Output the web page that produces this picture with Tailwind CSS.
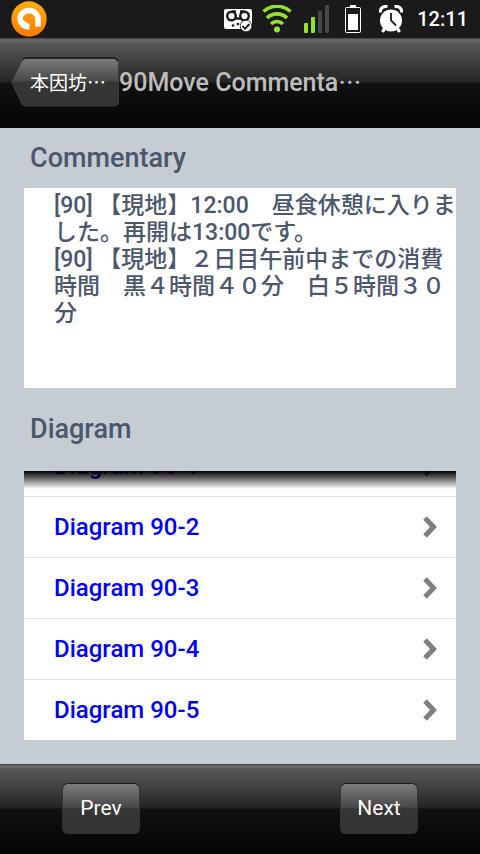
<!DOCTYPE html>
<html lang="ja">
<head>
<meta charset="utf-8">
<meta name="viewport" content="width=device-width, initial-scale=1">
<title>90Move Commentary</title>
<script src="https://cdn.jsdelivr.net/npm/@tailwindcss/browser@4"></script>
</head>
<body class="flex min-h-screen flex-col bg-[#c5ccd4] font-[Roboto,'Noto_Sans_CJK_JP',sans-serif] text-[#4c566c]">

<!-- Status bar -->
<div class="flex h-[38px] items-center bg-[#1a1a1a] pr-3 pl-[11px] text-white">
  <svg class="size-9" viewBox="0 0 36 36" aria-hidden="true">
    <defs><linearGradient id="orange" x1="0" y1="0" x2="0" y2="1"><stop offset="0" stop-color="#ffb000"/><stop offset="1" stop-color="#ff7a00"/></linearGradient></defs>
    <circle cx="18" cy="18" r="17.7" fill="url(#orange)"/>
    <path d="M18.500 25.500H17A8 8.300 0 0 1 9 17.500A9 8.500 0 0 1 18 9.500A8.900 8.500 0 0 1 27 18V25.500" fill="none" stroke="#fff" stroke-width="5.600"/>
    <path d="M9 20C9 25 13 28.400 17.500 28.400Q18.500 26 18 23L12 19Z" fill="#fff"/>
  </svg>
  <svg class="ml-auto h-[26px] w-7 shrink-0" viewBox="0 0 28 26" aria-hidden="true">
    <rect x="0" y="3" width="28" height="20" rx="2" fill="#fff"/>
    <g fill="none" stroke="#1a1a1a" stroke-width="2.400"><circle cx="7.500" cy="10" r="4.300"/><circle cx="20.500" cy="10" r="4.300"/><path d="M8 5.500h4M16 5.500h4M11 12.500h6"/></g>
    <circle cx="9" cy="19.500" r="1.300" fill="#1a1a1a"/><circle cx="14" cy="18" r="1.300" fill="#1a1a1a"/>
    <circle cx="22" cy="20" r="5.800" fill="#fff" stroke="#1a1a1a" stroke-width=".8"/>
    <path d="M18.500 20l2.500 2.600 4.500-4.600" fill="none" stroke="#1a1a1a" stroke-width="1.800"/>
  </svg>
  <svg class="ml-2.5 h-7 w-[30px] shrink-0" viewBox="0 0 30 28" aria-hidden="true">
    <g fill="none" stroke="#94e12d" stroke-width="3.600"><path d="M1.500 6.500C9-.5 21-.5 28.500 6.500"/><path d="M5 13c5.500-5.500 14.500-5.500 20 0"/><path d="M9 19c3.500-3.300 8.500-3.300 12 0"/></g>
    <circle cx="15" cy="24.500" r="3" fill="#94e12d"/>
  </svg>
  <svg class="ml-3 h-7 w-[26px] shrink-0" viewBox="0 0 26 28" aria-hidden="true">
    <rect x="0" y="18" width="4" height="10" rx="1" fill="#94e12d"/><rect x="7" y="12" width="4" height="16" rx="1" fill="#94e12d"/>
    <rect x="14" y="6" width="4" height="22" rx="1" fill="#484848"/><rect x="21" y="0" width="4" height="28" rx="1" fill="#484848"/>
  </svg>
  <svg class="ml-[15px] h-7 w-4 shrink-0" viewBox="0 0 16 28" aria-hidden="true">
    <rect x="5" y="0" width="6" height="2" fill="#fff"/><rect x=".5" y="2.500" width="15" height="25" rx="1" fill="none" stroke="#fff"/><rect x="3" y="9" width="10" height="16" fill="#fff"/>
  </svg>
  <svg class="ml-[18px] h-7 w-6 shrink-0" viewBox="0 0 24 28" aria-hidden="true">
    <circle cx="12" cy="15.500" r="11" fill="#fff"/>
    <path d="M1.300 7.500C1 3 4.500.8 8.500 1.700M22.700 7.500C23 3 19.500.8 15.500 1.700" fill="none" stroke="#fff" stroke-width="3.200"/>
    <path d="M5.500 23.500L3.500 27M18.500 23.500l2 3.500" stroke="#fff" stroke-width="3.200"/>
    <path d="M12 8v7.500l5 5" fill="none" stroke="#1a1a1a" stroke-width="1.800"/>
  </svg>
  <span class="ml-3.5 text-[20px] leading-7 font-medium">12:11</span>
</div>

<!-- Title bar -->
<header class="flex h-[90px] items-center border-t border-[#4a4a4a] bg-[linear-gradient(#5f5f5f_0px,#6b6b6b_2px,#575757_4px,#4e4e4e_12px,#242424_43px,#111_44px,#050505_88px)] pb-1 pl-[11px]">
  <button class="relative h-[50px] w-[108px] shrink-0 pl-1.5 font-['Noto_Sans_CJK_JP',sans-serif] text-[19px] leading-7 text-white">
    <svg class="absolute inset-0 size-full" viewBox="0 0 108 50" preserveAspectRatio="none" aria-hidden="true">
      <defs><linearGradient id="steel" x1="0" y1="0" x2="0" y2="1"><stop offset="0" stop-color="#7c7c7c"/><stop offset=".47" stop-color="#484848"/><stop offset=".5" stop-color="#363636"/><stop offset="1" stop-color="#343434"/></linearGradient></defs>
      <path d="M.5 25L11 3.500Q12.500 1.500 15 1.500H103Q107.500 1.500 107.500 6V45Q107.500 49 103 49H14Q12 49 11 47Z" fill="url(#steel)" stroke="#3c3c3c"/>
      <path d="M12 2.500L14 1H104L107 4" fill="none" stroke="#1c1c1c" stroke-width="1.500"/>
    </svg>
    <span class="relative">本因坊…</span>
  </button>
  <h1 class="text-[25px] leading-10 font-medium whitespace-nowrap text-[#bdbdbd]">90Move Commenta<span class="font-['Noto_Sans_CJK_JP',sans-serif] text-[23px]">…</span></h1>
</header>

<main class="flex-1 px-6 pb-6">
  <h2 class="flex h-[60px] items-center px-1.5 text-[27px] font-medium">Commentary</h2>
  <section class="min-h-[200px] bg-white pt-1 pl-[30px] text-[23px] leading-[27px] font-medium">
    <p>[90] 【現地】12:00　昼食休憩に入りました。再開は13:00です。<br>[90] 【現地】２日目午前中までの消費時間　黒４時間４０分　白５時間３０分</p>
  </section>

  <h2 class="flex h-[83px] items-center px-1.5 text-[27px] font-medium">Diagram</h2>
  <nav class="relative flex h-[269px] flex-col justify-end overflow-hidden bg-white text-[24px] font-medium text-[#0000f5]">
    <a href="#d1" class="flex h-[61px] shrink-0 items-center justify-between pr-[18px] pl-[30px]">Diagram 90-1
      <svg class="h-6 w-4" viewBox="0 0 16 24" aria-hidden="true"><path d="M3 3L11.500 12 3 21" fill="none" stroke="#7f7f7f" stroke-width="5"/></svg></a>
    <a href="#d2" class="flex h-[61px] shrink-0 items-center justify-between border-t border-[#e0e0e0] pr-[18px] pl-[30px]">Diagram 90-2
      <svg class="h-6 w-4" viewBox="0 0 16 24" aria-hidden="true"><path d="M3 3L11.500 12 3 21" fill="none" stroke="#7f7f7f" stroke-width="5"/></svg></a>
    <a href="#d3" class="flex h-[61px] shrink-0 items-center justify-between border-t border-[#e0e0e0] pr-[18px] pl-[30px]">Diagram 90-3
      <svg class="h-6 w-4" viewBox="0 0 16 24" aria-hidden="true"><path d="M3 3L11.500 12 3 21" fill="none" stroke="#7f7f7f" stroke-width="5"/></svg></a>
    <a href="#d4" class="flex h-[61px] shrink-0 items-center justify-between border-t border-[#e0e0e0] pr-[18px] pl-[30px]">Diagram 90-4
      <svg class="h-6 w-4" viewBox="0 0 16 24" aria-hidden="true"><path d="M3 3L11.500 12 3 21" fill="none" stroke="#7f7f7f" stroke-width="5"/></svg></a>
    <a href="#d5" class="flex h-[61px] shrink-0 items-center justify-between border-t border-[#e0e0e0] pr-[18px] pl-[30px]">Diagram 90-5
      <svg class="h-6 w-4" viewBox="0 0 16 24" aria-hidden="true"><path d="M3 3L11.500 12 3 21" fill="none" stroke="#7f7f7f" stroke-width="5"/></svg></a>
    <div class="pointer-events-none absolute inset-x-0 top-0 h-[18px] bg-linear-to-b from-black to-transparent"></div>
  </nav>
</main>

<!-- Bottom bar -->
<footer class="flex h-[90px] items-center justify-between border-t border-[#4a4a4a] bg-[linear-gradient(#5f5f5f_0px,#6b6b6b_2px,#575757_4px,#4e4e4e_12px,#242424_43px,#111_44px,#050505_88px)] px-[62px] pb-0.5">
  <button class="h-[51px] w-[78px] rounded-md border border-[#333] border-t-[#1c1c1c] bg-[linear-gradient(#7c7c7c,#484848_47%,#363636_50%,#343434)] text-[21px] text-white">Prev</button>
  <button class="h-[51px] w-[78px] rounded-md border border-[#333] border-t-[#1c1c1c] bg-[linear-gradient(#7c7c7c,#484848_47%,#363636_50%,#343434)] text-[21px] text-white">Next</button>
</footer>
</body>
</html>
